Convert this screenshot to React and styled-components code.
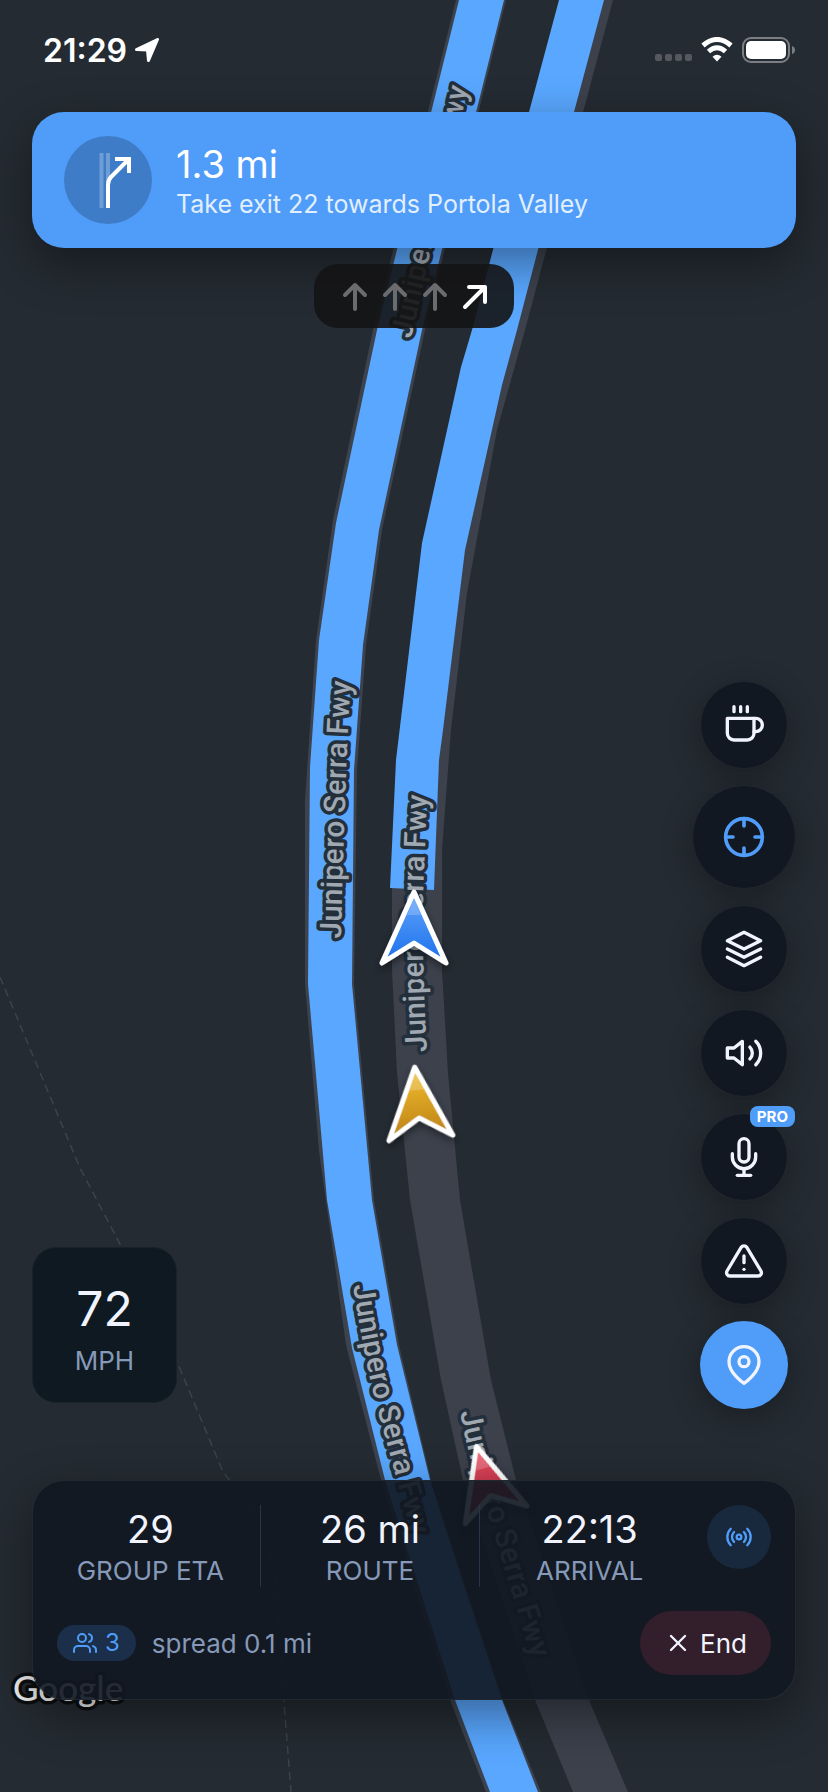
import React from "react";
import styled, { createGlobalStyle } from "styled-components";
import {
  FiAlertTriangle,
  FiCoffee,
  FiCrosshair,
  FiLayers,
  FiMapPin,
  FiMic,
  FiRadio,
  FiUsers,
  FiVolume2,
  FiX,
} from "react-icons/fi";

const stats = [
  { value: "29", label: "GROUP ETA" },
  { value: "26 mi", label: "ROUTE" },
  { value: "22:13", label: "ARRIVAL" },
];

const controls = [
  { name: "Stops", Icon: FiCoffee },
  { name: "Recenter", Icon: FiCrosshair, variant: "large" },
  { name: "Map layers", Icon: FiLayers },
  { name: "Sound", Icon: FiVolume2 },
  { name: "Voice chat", Icon: FiMic, badge: "PRO" },
  { name: "Report hazard", Icon: FiAlertTriangle },
  { name: "Drop pin", Icon: FiMapPin, variant: "primary" },
];

const lanes = ["up", "up", "up", "right"];

const roadNames = [
  "M411 339 L435 232 L467 92 L473 66",
  "M341 939 Q343 850 346 780 Q348 715 353 655",
  "M427 1052 Q421 950 424 870 Q426 820 429 765",
  "M353 1285 Q364 1360 380 1419 Q396 1475 420 1570",
  "M460 1412 Q471 1470 489 1518 Q508 1580 541 1690",
];

const vehicles = [
  { id: "red", x: 487, y: 1483, angle: -16, from: "#e84a60", to: "#b02a3c" },
  { id: "gold", x: 418, y: 1105, angle: -5, from: "#edb92c", to: "#bb8116" },
  { id: "blue", x: 414, y: 930, angle: 0, from: "#5a9ff8", to: "#1c70ec" },
];

function Vehicle({ id, x, y, angle, from, to }) {
  return (
    <g transform={`translate(${x} ${y}) rotate(${angle})`} filter="url(#drop)">
      <linearGradient id={id} x1="0" y1="0" x2="0" y2="1">
        <stop offset="0.1" stopColor={from} />
        <stop offset="1" stopColor={to} />
      </linearGradient>
      <path
        d="M0 -38 L32 33 L0 13 L-32 33 Z"
        fill={`url(#${id})`}
        stroke="#fff"
        strokeWidth="5"
        strokeLinejoin="round"
      />
      <path d="M0 -31 L7 -15 H-7 Z" fill="#fff" fillOpacity="0.2" />
    </g>
  );
}

function RouteMap() {
  return (
    <MapCanvas viewBox="0 0 828 1792" preserveAspectRatio="xMidYMid slice">
      <defs>
        <filter id="drop" x="-50%" y="-50%" width="200%" height="200%">
          <feDropShadow dx="0" dy="4" stdDeviation="4" floodOpacity="0.45" />
        </filter>
      </defs>
      <path
        d="M0 977 L80 1168 L122 1248 L178 1364 L223 1472 L248 1503 L275 1566 L284 1702 L291 1792"
        fill="none"
        stroke="#3b434c"
        strokeWidth="1.5"
        strokeDasharray="8 5"
      />
      {/* northbound carriageway */}
      <path
        fill="#3c414c"
        d="M562 0 H613 L525 330 L497 430 L467 593 L451 730 L442 850 L442 970 L448 1073 L460 1200 L491 1380 L516 1480 L589 1700 L628 1792 H573 L535 1700 L463 1480 L441 1380 L410 1200 L397 1073 L392 970 L392 880 L402 740 L425 545 L462 380 Z"
      />
      <path
        fill="#59a7ff"
        d="M559 0 H604 L574 112 L517 330 L502 385 L465 550 L443 730 L439 760 L434 890 L390 888 L396 760 L422 543 L461 367 L472 330 L529 112 Z"
      />
      {/* southbound carriageway */}
      <path
        fill="#3c434e"
        d="M456 0 H506 L425 330 L382 530 L366 645 L357 770 L354 984 L374 1200 L399 1345 L431 1480 L503 1700 L541 1792 H486 L450 1700 L381 1480 L346 1345 L319 1151 L305 984 L305 800 L316 640 L333 520 L373 330 Z"
      />
      <path
        fill="#59a7ff"
        d="M459 0 H504 L422 330 L379 530 L363 645 L354 770 L352 984 L372 1200 L397 1345 L430 1480 L455 1558 L502 1700 L538 1792 H490 L455 1700 L385 1480 L352 1348 L327 1200 L308 984 L310 767 L319 640 L336 523 L377 330 Z"
      />
      {roadNames.map((d, i) => (
        <g key={d}>
          <path id={`road-${i}`} d={d} fill="none" />
          <RoadName>
            <textPath href={`#road-${i}`}>Junipero Serra Fwy</textPath>
          </RoadName>
        </g>
      ))}
      {vehicles.map((vehicle) => (
        <Vehicle key={vehicle.id} {...vehicle} />
      ))}
      <Credit x="13" y="1701">
        Google
      </Credit>
    </MapCanvas>
  );
}

function LaneArrow({ direction }) {
  const active = direction === "right";
  return (
    <svg width="40" height="40" viewBox="0 0 40 40" fill="none">
      <path
        d={active ? "M11 31 L31 11 M15 11 H31 V26" : "M21 9 V33 M11 19 L21 9 L31 19"}
        stroke={active ? "#fff" : "#6c6c6e"}
        strokeWidth="4"
        strokeLinecap="round"
        strokeLinejoin="round"
      />
    </svg>
  );
}

export default function App() {
  return (
    <Screen>
      <GlobalStyle />
      <RouteMap />
      <StatusBar>
        <div className="clock">
          <time>21:29</time>
          <svg width="24" height="24" viewBox="0 0 24 24">
            <path
              d="M22.5 1.5 L13.5 22.5 L12.5 12 L1.5 11.5 Z"
              fill="#fff"
              stroke="#fff"
              strokeWidth="3"
              strokeLinejoin="round"
            />
          </svg>
        </div>
        <div className="indicators">
          <svg width="37" height="26" viewBox="0 0 37 26" fill="#55595f">
            <rect x="0" y="17" width="7" height="7" rx="2" />
            <rect x="10" y="17" width="7" height="7" rx="2" />
            <rect x="20" y="17" width="7" height="7" rx="2" />
            <rect x="30" y="17" width="7" height="7" rx="2" />
          </svg>
          <svg width="32" height="26" viewBox="0 0 32 26" fill="none">
            <path d="M2 8.5 Q16 -3.5 30 8.5" stroke="#fff" strokeWidth="5" />
            <path d="M7.5 14.5 Q16 7 24.5 14.5" stroke="#fff" strokeWidth="5" />
            <path d="M16 24.5 L11.5 19.7 Q16 16 20.5 19.7 Z" fill="#fff" />
          </svg>
          <svg width="54" height="26" viewBox="0 0 54 26" fill="none">
            <rect x="1" y="1" width="46" height="24" rx="8" stroke="#7b7f84" strokeWidth="2" />
            <rect x="4" y="4" width="40" height="18" rx="5" fill="#fff" />
            <path d="M50 9 Q53 10 53 13 Q53 16 50 17 Z" fill="#7b7f84" />
          </svg>
        </div>
      </StatusBar>

      <Maneuver>
        <div className="turn">
          <svg width="88" height="88" viewBox="0 0 88 88" fill="none">
            <path d="M37.5 17 V72 M44 17 V72" stroke="#fff" strokeOpacity="0.25" strokeWidth="4" />
            <path
              d="M44 72 V49 Q44 44 47 41 L65 23 M51 23 H65 V37"
              stroke="#fff"
              strokeWidth="4"
            />
          </svg>
        </div>
        <div>
          <h1>1.3 mi</h1>
          <p>Take exit 22 towards Portola Valley</p>
        </div>
      </Maneuver>

      <Lanes>
        {lanes.map((direction, i) => (
          <LaneArrow key={i} direction={direction} />
        ))}
      </Lanes>

      <Middle>
        <Speed>
          <strong>72</strong>
          <span>MPH</span>
        </Speed>
        <Controls>
          {controls.map(({ name, Icon, variant, badge }) => (
            <RoundButton key={name} type="button" aria-label={name} $variant={variant}>
              <Icon />
              {badge && <Badge>{badge}</Badge>}
            </RoundButton>
          ))}
        </Controls>
      </Middle>

      <TripPanel>
        <TripStats>
          {stats.map(({ value, label }) => (
            <Stat key={label}>
              <strong>{value}</strong>
              <span>{label}</span>
            </Stat>
          ))}
          <Broadcast type="button" aria-label="Broadcast">
            <FiRadio />
          </Broadcast>
        </TripStats>
        <TripFooter>
          <Riders>
            <FiUsers /> 3
          </Riders>
          <p>spread 0.1 mi</p>
          <EndButton type="button">
            <FiX /> End
          </EndButton>
        </TripFooter>
      </TripPanel>
    </Screen>
  );
}

const GlobalStyle = createGlobalStyle`
  * {
    box-sizing: border-box;
    margin: 0;
    padding: 0;
  }
  body {
    background: #242b32;
    font-family: Inter, "Liberation Sans", sans-serif;
    color: #f1f4ff;
  }
  button {
    border: none;
    cursor: pointer;
    font-family: inherit;
    color: inherit;
  }
  svg {
    display: block;
    flex-shrink: 0;
  }
`;

const Screen = styled.main`
  position: relative;
  display: flex;
  flex-direction: column;
  min-height: 100vh;
  padding: 0 32px 92px;
  overflow: hidden;
  > * {
    z-index: 1;
  }
`;

const MapCanvas = styled.svg`
  position: absolute;
  inset: 0;
  z-index: 0;
  width: 100%;
  height: 100%;
`;

const RoadName = styled.text`
  font-family: Roboto, sans-serif;
  font-size: 30px;
  font-weight: 500;
  fill: #a0a8b2;
  stroke: #232f3b;
  stroke-width: 7px;
  stroke-linejoin: round;
  paint-order: stroke;
`;

const Credit = styled.text`
  font-family: Lato, sans-serif;
  font-size: 35px;
  font-weight: 500;
  fill: #f0f0f0;
  stroke: #0c0e10;
  stroke-width: 7px;
  stroke-linejoin: round;
  paint-order: stroke;
`;

const StatusBar = styled.header`
  display: flex;
  justify-content: space-between;
  align-items: center;
  height: 112px;
  padding: 0 0 12px 11px;
  .clock {
    display: flex;
    align-items: center;
    gap: 8px;
    color: #fff;
    time {
      font-size: 32px;
      font-weight: 600;
    }
  }
  .indicators {
    display: flex;
    align-items: center;
    gap: 9px;
  }
`;

const Maneuver = styled.section`
  display: flex;
  align-items: center;
  gap: 24px;
  padding: 24px 32px;
  border-radius: 32px;
  background: #4f9cf9;
  box-shadow: 0 16px 48px rgba(0, 0, 0, 0.4);
  .turn {
    border-radius: 50%;
    background: rgba(0, 0, 0, 0.2);
  }
  h1 {
    font-size: 38px;
    font-weight: 400;
    line-height: 48px;
    color: #fff;
  }
  p {
    font-size: 25px;
    line-height: 32px;
    color: #e2effe;
  }
`;

const Lanes = styled.div`
  display: flex;
  align-self: center;
  margin-top: 16px;
  padding: 12px 20px;
  border-radius: 24px;
  background: rgba(20, 20, 21, 0.9);
`;

const Middle = styled.div`
  display: flex;
  flex: 1;
  justify-content: space-between;
  align-items: flex-end;
  padding-bottom: 71px;
`;

const Speed = styled.div`
  display: flex;
  flex-direction: column;
  align-items: center;
  gap: 8px;
  width: 145px;
  margin-bottom: 6px;
  padding: 33px 0 25px;
  border: 1px solid #19222b;
  border-radius: 24px;
  background: rgba(14, 24, 33, 0.95);
  strong {
    font-size: 48px;
    font-weight: 400;
    line-height: 56px;
  }
  span {
    font-size: 26px;
    line-height: 32px;
    color: #8699b9;
  }
`;

const Controls = styled.nav`
  display: flex;
  flex-direction: column;
  align-items: center;
  gap: 16px;
`;

const RoundButton = styled.button`
  position: relative;
  display: flex;
  justify-content: center;
  align-items: center;
  width: ${({ $variant }) => ($variant === "large" ? "104px" : "88px")};
  height: ${({ $variant }) => ($variant === "large" ? "104px" : "88px")};
  border: ${({ $variant }) => ($variant === "primary" ? "none" : "1px solid #202830")};
  border-radius: 50%;
  background: ${({ $variant }) => ($variant === "primary" ? "#4f9cf9" : "#111822")};
  color: ${({ $variant }) => ($variant === "large" ? "#4f9cf9" : "#f1f4ff")};
  box-shadow: 0 8px 32px rgba(0, 0, 0, 0.3);
  svg {
    width: ${({ $variant }) => ($variant === "large" ? "44px" : "40px")};
    height: ${({ $variant }) => ($variant === "large" ? "44px" : "40px")};
  }
`;

const Badge = styled.span`
  position: absolute;
  top: -8px;
  right: -8px;
  padding: 0 7px;
  border-radius: 8px;
  background: #4f9cf9;
  color: #fff;
  font-size: 15px;
  font-weight: 700;
  line-height: 21px;
`;

const TripPanel = styled.section`
  display: flex;
  flex-direction: column;
  gap: 24px;
  padding: 24px 24px 24px 8px;
  border: 1px solid #202831;
  border-radius: 32px;
  background: rgba(16, 23, 33, 0.91);
  background-clip: padding-box;
  box-shadow: 0 16px 48px rgba(0, 0, 0, 0.4);
`;

const TripStats = styled.div`
  display: flex;
`;

const Stat = styled.div`
  display: flex;
  flex: 1;
  flex-direction: column;
  align-items: center;
  gap: 2px;
  & + & {
    border-left: 1px solid #26354a;
  }
  strong {
    font-size: 38px;
    font-weight: 400;
    line-height: 48px;
  }
  span {
    font-size: 26px;
    line-height: 32px;
    color: #8699b9;
  }
`;

const Broadcast = styled.button`
  display: flex;
  justify-content: center;
  align-items: center;
  width: 64px;
  height: 64px;
  margin-left: 8px;
  border-radius: 50%;
  background: #18283d;
  color: #4f9cf9;
  svg {
    width: 28px;
    height: 28px;
  }
`;

const TripFooter = styled.div`
  display: flex;
  align-items: center;
  gap: 16px;
  padding-left: 16px;
  p {
    font-size: 26px;
    color: #8699b9;
  }
`;

const Riders = styled.span`
  display: flex;
  align-items: center;
  gap: 8px;
  padding: 0 16px;
  border-radius: 18px;
  background: #1b2f4a;
  color: #4f9cf9;
  font-size: 24px;
  line-height: 36px;
  svg {
    width: 24px;
    height: 24px;
  }
`;

const EndButton = styled.button`
  display: flex;
  align-items: center;
  gap: 8px;
  height: 64px;
  margin-left: auto;
  padding: 0 24px;
  border-radius: 32px;
  background: #321f2b;
  font-size: 26px;
  svg {
    width: 28px;
    height: 28px;
  }
`;
